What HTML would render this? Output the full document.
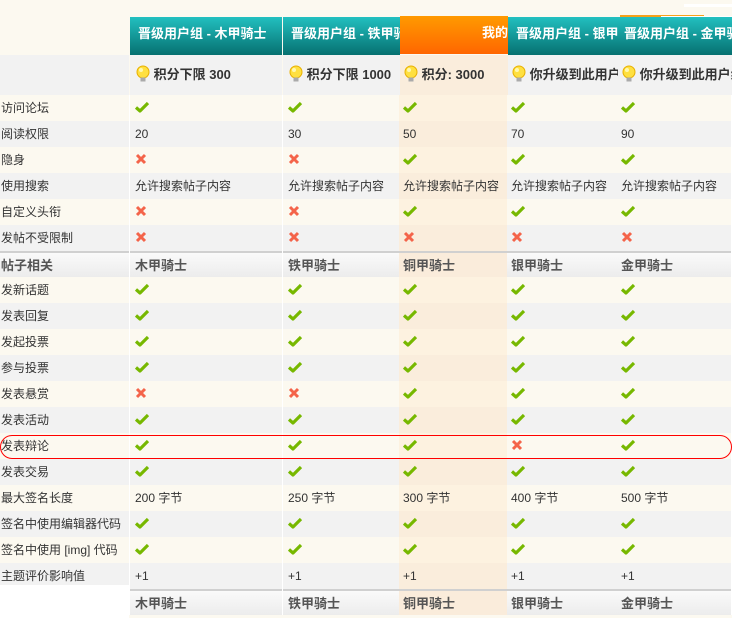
<!DOCTYPE html>
<html><head><meta charset="utf-8"><style>
*{margin:0;padding:0;box-sizing:border-box}
body{width:732px;height:618px;overflow:hidden;background:#fcf9f0;font:12px "Liberation Sans","Noto Sans CJK SC",sans-serif;color:#333;position:relative}
.a{position:absolute}
.row{position:absolute;left:0;width:732px;height:26px;display:flex;line-height:26px}
.row>div{height:100%;overflow:hidden;white-space:nowrap;padding-left:5px}
.w0{width:129px;padding-left:1px!important}
.w1{width:152px;margin-left:1px}
.w2{width:116px;margin-left:1px}
.w3{width:108px;padding-left:4px!important}
.w4{width:110px;padding-left:4px!important}
.w5{width:114px;padding-left:4px!important}
.cr>div{background:#fcf9f0}
.gr>div{background:#f2f2f2}
.cr>.w3{background:#fdf2e0}
.gr>.w3{background:#faeddc}
.sec>div{background:linear-gradient(#fafafa,#ececec);border-top:2px solid #d0d0d0;font-weight:bold;color:#555;font-size:13px}
.sec>.w3{background:#faecdb}
.row{background:#fff}
svg{vertical-align:middle;margin-top:-3px}
.hd{position:absolute;top:17px;height:38px;background:linear-gradient(#22c0c0,#067070);color:#fff;font-weight:bold;font-size:13px;line-height:34px;white-space:nowrap;overflow:hidden;padding-left:8px}
.pt{position:absolute;top:55px;height:40px;background:#f2f2f2;font-weight:bold;font-size:13px;line-height:40px;white-space:nowrap;overflow:hidden;padding-left:6px;color:#333}
</style></head><body>
<svg width="0" height="0" style="position:absolute">
<defs>
<symbol id="c" viewBox="0 0 14 12"><path d="M1 6.5 L5 10 L13 2" stroke="#77b800" stroke-width="3.2" fill="none" stroke-linejoin="round"/></symbol>
<symbol id="x" viewBox="0 0 12 12"><path d="M2 2 L10 10 M10 2 L2 10" stroke="#f4644a" stroke-width="3" fill="none"/></symbol>
<symbol id="b" viewBox="0 0 14 18"><circle cx="7" cy="7" r="6" fill="#ffe040" stroke="#e8b000"/><circle cx="5" cy="5" r="2" fill="#fff8b0"/><rect x="4.5" y="12.5" width="5" height="4" fill="#aaa"/></symbol>
</defs></svg>
<div class="a" style="left:684px;top:4px;width:48px;height:3px;background:#fff"></div>
<div class="a" style="left:620px;top:15px;width:84px;height:2px;background:#f7a21a"></div>
<div class="a" style="left:661px;top:16px;width:71px;height:2px;background:#fff"></div>
<div class="a" style="left:0;top:55px;width:129px;height:40px;background:#f2f2f2"></div>
<div class="hd" style="left:130px;width:152px">晋级用户组 - 木甲骑士</div>
<div class="hd" style="left:283px;width:117px">晋级用户组 - 铁甲骑士</div>
<div class="hd" style="left:400px;top:16px;width:108px;background:linear-gradient(#ff9a00,#ff6600);text-align:right;padding:0">我的</div>
<div class="hd" style="left:508px;width:110px">晋级用户组 - 银甲骑士</div>
<div class="hd" style="left:618px;width:114px;padding-left:6px">晋级用户组 - 金甲骑士</div>
<div class="pt" style="left:130px;width:152px"><svg width="14" height="18"><use href="#b"/></svg> 积分下限 300</div>
<div class="pt" style="left:283px;width:117px"><svg width="14" height="18"><use href="#b"/></svg> 积分下限 1000</div>
<div class="pt" style="left:400px;width:108px;background:#faeddc;padding-left:4px"><svg width="14" height="18"><use href="#b"/></svg> 积分: 3000</div>
<div class="pt" style="left:508px;width:110px;padding-left:4px"><svg width="14" height="18"><use href="#b"/></svg> 你升级到此用户组</div>
<div class="pt" style="left:618px;width:114px;padding-left:4px"><svg width="14" height="18"><use href="#b"/></svg> 你升级到此用户组</div>

<div class="row cr" style="top:95px"><div class="w0">访问论坛</div><div class="w1"><svg width="14" height="12"><use href="#c"/></svg></div><div class="w2"><svg width="14" height="12"><use href="#c"/></svg></div><div class="w3"><svg width="14" height="12"><use href="#c"/></svg></div><div class="w4"><svg width="14" height="12"><use href="#c"/></svg></div><div class="w5"><svg width="14" height="12"><use href="#c"/></svg></div></div>
<div class="row gr" style="top:121px"><div class="w0">阅读权限</div><div class="w1">20</div><div class="w2">30</div><div class="w3">50</div><div class="w4">70</div><div class="w5">90</div></div>
<div class="row cr" style="top:147px"><div class="w0">隐身</div><div class="w1"><svg width="12" height="12"><use href="#x"/></svg></div><div class="w2"><svg width="12" height="12"><use href="#x"/></svg></div><div class="w3"><svg width="14" height="12"><use href="#c"/></svg></div><div class="w4"><svg width="14" height="12"><use href="#c"/></svg></div><div class="w5"><svg width="14" height="12"><use href="#c"/></svg></div></div>
<div class="row gr" style="top:173px"><div class="w0">使用搜索</div><div class="w1">允许搜索帖子内容</div><div class="w2">允许搜索帖子内容</div><div class="w3">允许搜索帖子内容</div><div class="w4">允许搜索帖子内容</div><div class="w5">允许搜索帖子内容</div></div>
<div class="row cr" style="top:199px"><div class="w0">自定义头衔</div><div class="w1"><svg width="12" height="12"><use href="#x"/></svg></div><div class="w2"><svg width="12" height="12"><use href="#x"/></svg></div><div class="w3"><svg width="14" height="12"><use href="#c"/></svg></div><div class="w4"><svg width="14" height="12"><use href="#c"/></svg></div><div class="w5"><svg width="14" height="12"><use href="#c"/></svg></div></div>
<div class="row gr" style="top:225px"><div class="w0">发帖不受限制</div><div class="w1"><svg width="12" height="12"><use href="#x"/></svg></div><div class="w2"><svg width="12" height="12"><use href="#x"/></svg></div><div class="w3"><svg width="12" height="12"><use href="#x"/></svg></div><div class="w4"><svg width="12" height="12"><use href="#x"/></svg></div><div class="w5"><svg width="12" height="12"><use href="#x"/></svg></div></div>
<div class="row sec" style="top:251px"><div class="w0">帖子相关</div><div class="w1">木甲骑士</div><div class="w2">铁甲骑士</div><div class="w3">铜甲骑士</div><div class="w4">银甲骑士</div><div class="w5">金甲骑士</div></div>
<div class="row cr" style="top:277px"><div class="w0">发新话题</div><div class="w1"><svg width="14" height="12"><use href="#c"/></svg></div><div class="w2"><svg width="14" height="12"><use href="#c"/></svg></div><div class="w3"><svg width="14" height="12"><use href="#c"/></svg></div><div class="w4"><svg width="14" height="12"><use href="#c"/></svg></div><div class="w5"><svg width="14" height="12"><use href="#c"/></svg></div></div>
<div class="row gr" style="top:303px"><div class="w0">发表回复</div><div class="w1"><svg width="14" height="12"><use href="#c"/></svg></div><div class="w2"><svg width="14" height="12"><use href="#c"/></svg></div><div class="w3"><svg width="14" height="12"><use href="#c"/></svg></div><div class="w4"><svg width="14" height="12"><use href="#c"/></svg></div><div class="w5"><svg width="14" height="12"><use href="#c"/></svg></div></div>
<div class="row cr" style="top:329px"><div class="w0">发起投票</div><div class="w1"><svg width="14" height="12"><use href="#c"/></svg></div><div class="w2"><svg width="14" height="12"><use href="#c"/></svg></div><div class="w3"><svg width="14" height="12"><use href="#c"/></svg></div><div class="w4"><svg width="14" height="12"><use href="#c"/></svg></div><div class="w5"><svg width="14" height="12"><use href="#c"/></svg></div></div>
<div class="row gr" style="top:355px"><div class="w0">参与投票</div><div class="w1"><svg width="14" height="12"><use href="#c"/></svg></div><div class="w2"><svg width="14" height="12"><use href="#c"/></svg></div><div class="w3"><svg width="14" height="12"><use href="#c"/></svg></div><div class="w4"><svg width="14" height="12"><use href="#c"/></svg></div><div class="w5"><svg width="14" height="12"><use href="#c"/></svg></div></div>
<div class="row cr" style="top:381px"><div class="w0">发表悬赏</div><div class="w1"><svg width="12" height="12"><use href="#x"/></svg></div><div class="w2"><svg width="12" height="12"><use href="#x"/></svg></div><div class="w3"><svg width="14" height="12"><use href="#c"/></svg></div><div class="w4"><svg width="14" height="12"><use href="#c"/></svg></div><div class="w5"><svg width="14" height="12"><use href="#c"/></svg></div></div>
<div class="row gr" style="top:407px"><div class="w0">发表活动</div><div class="w1"><svg width="14" height="12"><use href="#c"/></svg></div><div class="w2"><svg width="14" height="12"><use href="#c"/></svg></div><div class="w3"><svg width="14" height="12"><use href="#c"/></svg></div><div class="w4"><svg width="14" height="12"><use href="#c"/></svg></div><div class="w5"><svg width="14" height="12"><use href="#c"/></svg></div></div>
<div class="row cr" style="top:433px"><div class="w0">发表辩论</div><div class="w1"><svg width="14" height="12"><use href="#c"/></svg></div><div class="w2"><svg width="14" height="12"><use href="#c"/></svg></div><div class="w3"><svg width="14" height="12"><use href="#c"/></svg></div><div class="w4"><svg width="12" height="12"><use href="#x"/></svg></div><div class="w5"><svg width="14" height="12"><use href="#c"/></svg></div></div>
<div class="row gr" style="top:459px"><div class="w0">发表交易</div><div class="w1"><svg width="14" height="12"><use href="#c"/></svg></div><div class="w2"><svg width="14" height="12"><use href="#c"/></svg></div><div class="w3"><svg width="14" height="12"><use href="#c"/></svg></div><div class="w4"><svg width="14" height="12"><use href="#c"/></svg></div><div class="w5"><svg width="14" height="12"><use href="#c"/></svg></div></div>
<div class="row cr" style="top:485px"><div class="w0">最大签名长度</div><div class="w1">200 字节</div><div class="w2">250 字节</div><div class="w3">300 字节</div><div class="w4">400 字节</div><div class="w5">500 字节</div></div>
<div class="row gr" style="top:511px"><div class="w0">签名中使用编辑器代码</div><div class="w1"><svg width="14" height="12"><use href="#c"/></svg></div><div class="w2"><svg width="14" height="12"><use href="#c"/></svg></div><div class="w3"><svg width="14" height="12"><use href="#c"/></svg></div><div class="w4"><svg width="14" height="12"><use href="#c"/></svg></div><div class="w5"><svg width="14" height="12"><use href="#c"/></svg></div></div>
<div class="row cr" style="top:537px"><div class="w0">签名中使用 [img] 代码</div><div class="w1"><svg width="14" height="12"><use href="#c"/></svg></div><div class="w2"><svg width="14" height="12"><use href="#c"/></svg></div><div class="w3"><svg width="14" height="12"><use href="#c"/></svg></div><div class="w4"><svg width="14" height="12"><use href="#c"/></svg></div><div class="w5"><svg width="14" height="12"><use href="#c"/></svg></div></div>
<div class="row gr" style="top:563px"><div class="w0">主题评价影响值</div><div class="w1">+1</div><div class="w2">+1</div><div class="w3">+1</div><div class="w4">+1</div><div class="w5">+1</div></div>
<div class="row sec" style="top:589px;background:#fff"><div class="w0" style="background:#fff;border-top:0"></div><div class="w1">木甲骑士</div><div class="w2">铁甲骑士</div><div class="w3">铜甲骑士</div><div class="w4">银甲骑士</div><div class="w5">金甲骑士</div></div>
<div class="a" style="left:0;top:585px;width:129px;height:33px;background:#fff"></div>
<div class="a" style="left:0;top:435px;width:732px;height:24px;border:1px solid #f00;border-radius:12px"></div>
</body></html>
